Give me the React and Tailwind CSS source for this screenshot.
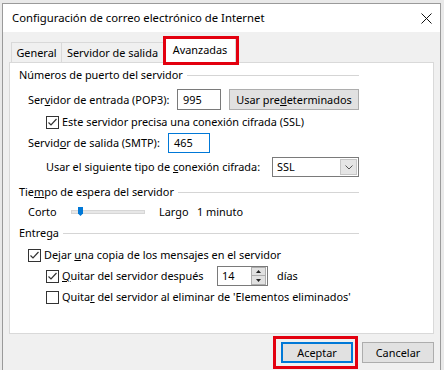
import React from "react";

const font = { fontFamily: '"Noto Sans", "Open Sans", sans-serif' };

function Check({ checked }) {
  return (
    <div className="w-[13px] h-[13px] border border-[#333333] bg-white flex items-center justify-center shrink-0">
      {checked && (
        <svg width="11" height="11" viewBox="0 0 11 11">
          <path d="M1.5 5.5 L4 8 L9.5 2" fill="none" stroke="#333333" strokeWidth="1.2" />
        </svg>
      )}
    </div>
  );
}

function GroupTitle({ children, className }) {
  return (
    <div className={"flex items-center h-[16px] ml-[9px] w-[340px] " + className}>
      <span>{children}</span>
      <div className="flex-1 h-px bg-[#d5d5d5] ml-[4px]" />
    </div>
  );
}

function WinButton({ children, className }) {
  return (
    <div className={"h-[21px] bg-[#e1e1e1] border border-[#adadad] flex items-center justify-center " + className}>
      {children}
    </div>
  );
}

export default function App() {
  return (
    <div className="w-[444px] h-[370px] overflow-hidden bg-[#e9e9e9] pt-[3px] pl-[2px] pr-[3px] text-[10.9px] leading-[16px] whitespace-nowrap text-black" style={font}>
      <div className="border border-[#9a9a9a] bg-[#f0f0f0] h-[380px]">
        {/* title bar */}
        <div className="h-[28px] bg-white flex items-center pl-[9px] pr-[8px] text-[11.3px]">
          <span className="flex-1">Configuración de correo electrónico de Internet</span>
          <svg width="11" height="11" viewBox="0 0 11 11">
            <path d="M0.5 0.5 L10.5 10.5 M10.5 0.5 L0.5 10.5" stroke="#111" strokeWidth="1" />
          </svg>
        </div>

        <div className="pl-[6px] pr-[6px] pt-[6px]">
          {/* tabs */}
          <div className="flex h-[24px] ml-[2px] items-start">
            <div className="mt-[4px] h-[20px] w-[51px] border border-b-0 border-[#d9d9d9] flex items-center justify-center">General</div>
            <div className="mt-[4px] h-[20px] w-[102px] border border-b-0 border-l-0 border-[#d9d9d9] flex items-center justify-center">Servidor de salida</div>
            <div className="relative h-[25px] w-[72px] bg-white border border-b-0 border-[#d9d9d9] flex items-center justify-center pb-[2px] z-10">
              Avanzadas
              <div className="absolute left-[-2px] top-[-3px] w-[76px] h-[29px] border-[3px] border-[#e3000f]" />
            </div>
          </div>

          {/* panel */}
          <div className="h-[272px] bg-white border border-[#d9d9d9] pt-[4px]">
            <GroupTitle>Números de puerto del servidor</GroupTitle>

            <div className="flex items-center h-[21px] mt-[6px]">
              <span className="ml-[18px] w-[149px]">Ser<u>v</u>idor de entrada (POP3):</span>
              <div className="w-[44px] h-[21px] border border-[#7a7a7a] flex items-center pl-[5px]">995</div>
              <WinButton className="ml-[8px] w-[130px]">Usar pre<u>d</u>eterminados</WinButton>
            </div>

            <div className="flex items-center h-[16px] mt-[4px] ml-[36px]">
              <Check checked />
              <span className="ml-[3px]">Este servidor precisa una conexión cifrada (SSL)</span>
            </div>

            <div className="flex items-center h-[20px] mt-[3px]">
              <span className="ml-[18px] w-[140px]">Servid<u>o</u>r de salida (SMTP):</span>
              <div className="w-[42px] h-[20px] border border-[#0078d7] flex items-center pl-[5px]">465</div>
            </div>

            <div className="flex items-center h-[20px] mt-[4px]">
              <span className="ml-[36px] w-[226px]">Usar el siguiente tipo de <u>c</u>onexión cifrada:</span>
              <div className="w-[87px] h-[20px] border border-[#7a7a7a] flex items-center">
                <span className="flex-1 pl-[4px]">SSL</span>
                <div className="w-[17px] h-[16px] mr-[1px] bg-[#e5e5e5] border border-[#c6c6c6] flex items-center justify-center">
                  <svg width="8" height="5" viewBox="0 0 8 5">
                    <path d="M0.5 0.5 L4 4 L7.5 0.5" fill="none" stroke="#555" strokeWidth="1" />
                  </svg>
                </div>
              </div>
            </div>

            <GroupTitle className="mt-[7px]">Tie<u>m</u>po de espera del servidor</GroupTitle>

            <div className="flex items-center h-[16px] mt-[4px]">
              <span className="ml-[18px] w-[43px]">Corto</span>
              <div className="relative w-[74px] h-[4px] bg-[#e7e7e7] border border-[#d6d6d6]">
                <svg className="absolute left-[6px] top-[-4px]" width="5" height="9" viewBox="0 0 5 9">
                  <path d="M0 0 H5 V6.5 L2.5 9 L0 6.5 Z" fill="#0078d7" />
                </svg>
              </div>
              <span className="ml-[14px] w-[38px]">Largo</span>
              <span>1 minuto</span>
            </div>

            <GroupTitle className="mt-[5px]">Entrega</GroupTitle>

            <div className="flex items-center h-[16px] mt-[6px] ml-[18px]">
              <Check checked />
              <span className="ml-[3px]">Dejar <u>u</u>na copia de los mensajes en el servidor</span>
            </div>

            <div className="flex items-center h-[22px] mt-[2px] ml-[36px]">
              <Check checked />
              <span className="ml-[3px] w-[155px]"><u>Q</u>uitar del servidor después</span>
              <div className="w-[51px] h-[20px] border border-[#7a7a7a] flex items-center">
                <span className="flex-1 pl-[4px]">14</span>
                <div className="flex flex-col w-[15px] h-[18px] mr-[1px]">
                  <div className="h-[9px] bg-[#e1e1e1] border border-[#adadad] flex items-center justify-center">
                    <svg width="5" height="3" viewBox="0 0 5 3"><path d="M0 3 L2.5 0 L5 3 Z" fill="#222" /></svg>
                  </div>
                  <div className="h-[9px] bg-[#e1e1e1] border border-t-0 border-[#adadad] flex items-center justify-center">
                    <svg width="5" height="3" viewBox="0 0 5 3"><path d="M0 0 L2.5 3 L5 0 Z" fill="#222" /></svg>
                  </div>
                </div>
              </div>
              <span className="ml-[9px]">días</span>
            </div>

            <div className="flex items-center h-[16px] mt-[2px] ml-[36px]">
              <Check />
              <span className="ml-[3px]">Quita<u>r</u> del servidor al eliminar de 'Elementos eliminados'</span>
            </div>
          </div>

          {/* buttons */}
          <div className="flex justify-end mt-[8px] gap-[9px]">
            <div className="relative">
              <div className="w-[72px] h-[21px] bg-[#e1e1e1] border-2 border-[#0078d7] flex items-center justify-center">Aceptar</div>
              <div className="absolute left-[-8px] top-[-6px] w-[85px] h-[33px] border-[3px] border-[#e3000f]" />
            </div>
            <WinButton className="w-[72px]">Cancelar</WinButton>
          </div>
        </div>
      </div>
    </div>
  );
}
